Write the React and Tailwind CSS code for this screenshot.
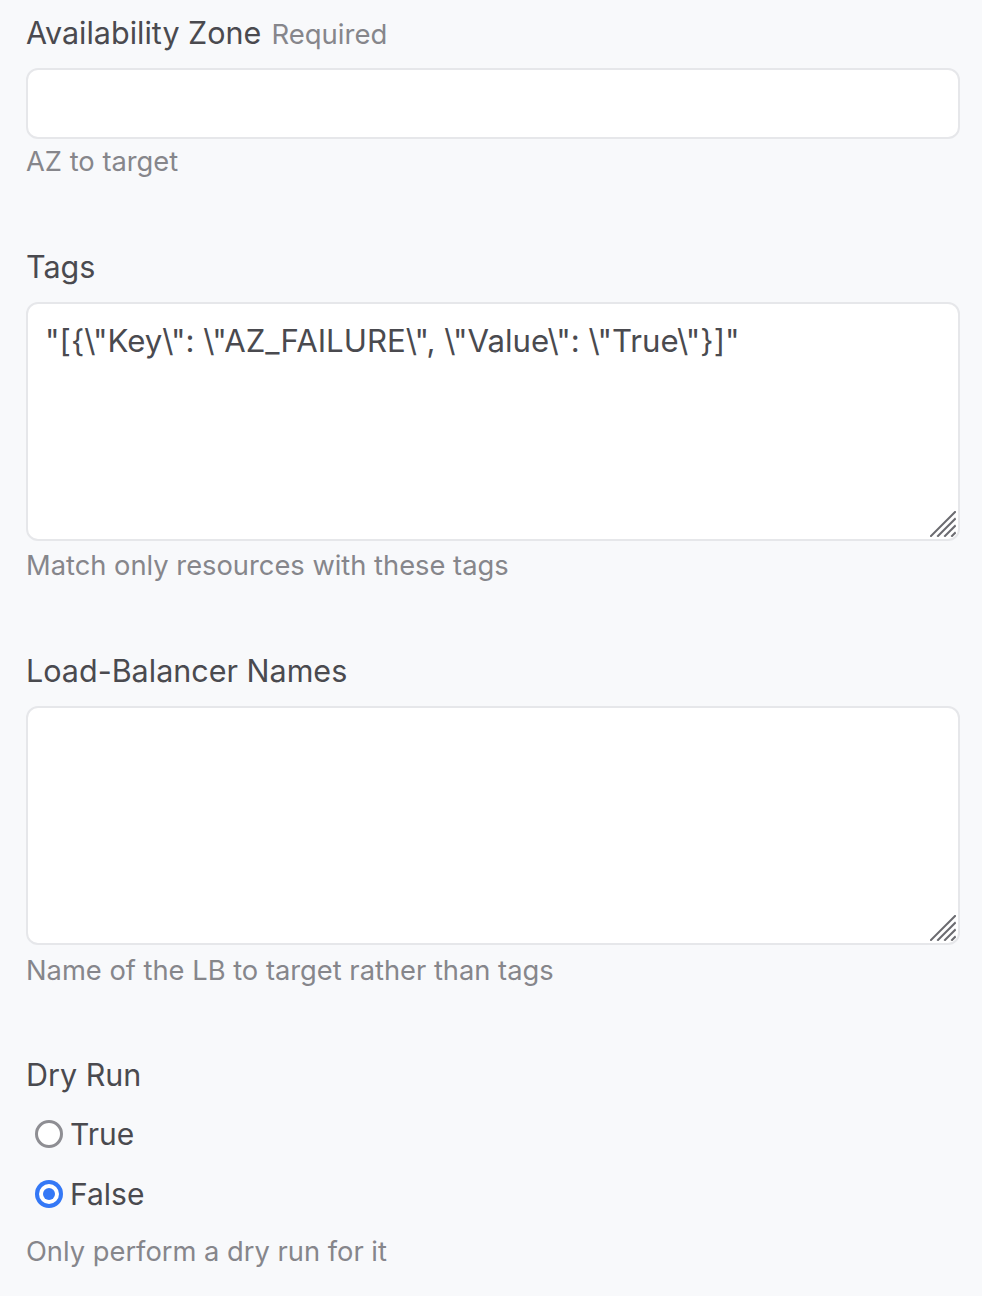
import { useState } from 'react';

function Help({ children, className = '' }) {
  return <p className={`text-[27.3px] leading-[34px] text-[#86868b] ${className}`}>{children}</p>;
}

function Label({ children, required }) {
  return (
    <label className="block text-[30.5px] leading-[36px] text-[#4a4a4f]">
      {children}
      {required && <span className="ml-[10px] text-[27.5px] text-[#86868b]">Required</span>}
    </label>
  );
}

function Grip() {
  return (
    <svg
      className="pointer-events-none absolute bottom-[4px] right-[4px]"
      width="26"
      height="26"
      viewBox="0 0 26 26"
      stroke="#6b6b70"
      strokeWidth="2"
      strokeLinecap="square"
    >
      <line x1="1" y1="25" x2="25" y2="1" />
      <line x1="8" y1="25" x2="25" y2="8" />
      <line x1="15" y1="25" x2="25" y2="15" />
      <line x1="22" y1="25" x2="25" y2="22" />
    </svg>
  );
}

function TextArea({ value }) {
  return (
    <div className="relative mt-[17px]">
      <textarea
        defaultValue={value}
        className="block h-[239px] w-full resize-none rounded-[12px] border-2 border-[#e6e7ea] bg-white px-[17px] pt-[19px] text-[31.2px] leading-[36px] text-[#4a4a4f] outline-none"
      />
      <Grip />
    </div>
  );
}

function Radio({ checked, label, onClick }) {
  return (
    <button type="button" onClick={onClick} className="flex h-[60px] items-center gap-[7px] pl-[9px]">
      {checked ? (
        <span className="flex h-[28px] w-[28px] items-center justify-center rounded-full bg-[#3478f6]">
          <span className="flex h-[20px] w-[20px] items-center justify-center rounded-full bg-white">
            <span className="h-[12px] w-[12px] rounded-full bg-[#3478f6]" />
          </span>
        </span>
      ) : (
        <span className="h-[28px] w-[28px] rounded-full border-[3px] border-[#8e8e93] bg-white" />
      )}
      <span className="text-[30px] leading-[36px] text-[#4a4a4f]">{label}</span>
    </button>
  );
}

export default function App() {
  const [dryRun, setDryRun] = useState(false);

  return (
    <div className="min-h-[1296px] bg-[#f8f9fb] pl-[26px] pr-[22px] pt-[15px] font-['Inter','Noto_Sans',sans-serif] antialiased">
      <div>
        <Label required>Availability Zone</Label>
        <input className="mt-[16px] block h-[71px] w-full rounded-[12px] border-2 border-[#e6e7ea] bg-white px-[17px] text-[30px] text-[#4a4a4f] outline-none" />
        <Help className="mt-[6px]">AZ to target</Help>
      </div>

      <div className="mt-[70px]">
        <Label>Tags</Label>
        <TextArea value={'"[{\\"Key\\": \\"AZ_FAILURE\\", \\"Value\\": \\"True\\"}]"'} />
        <Help className="mt-[8px]">Match only resources with these tags</Help>
      </div>

      <div className="mt-[70px]">
        <Label>Load-Balancer Names</Label>
        <TextArea value="" />
        <Help className="mt-[9px]">Name of the LB to target rather than tags</Help>
      </div>

      <div className="mt-[69px]">
        <Label>Dry Run</Label>
        <div className="mt-[11px] flex flex-col">
          <Radio checked={dryRun} label="True" onClick={() => setDryRun(true)} />
          <Radio checked={!dryRun} label="False" onClick={() => setDryRun(false)} />
        </div>
        <Help className="mt-[11px]">Only perform a dry run for it</Help>
      </div>
    </div>
  );
}
